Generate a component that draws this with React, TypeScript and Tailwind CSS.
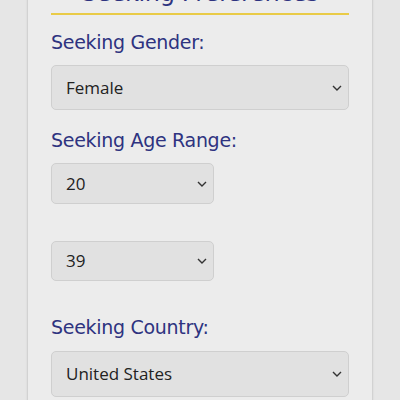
import React from "react";

const Chevron = () => (
  <svg
    className="pointer-events-none absolute right-[7px] top-1/2 -translate-y-1/2"
    width="10"
    height="6"
    viewBox="0 0 10 6"
    fill="none"
  >
    <path d="M1 1l4 4 4-4" stroke="#333" strokeWidth="1.4" />
  </svg>
);

const Select = ({
  value,
  options,
  className,
}: {
  value: string;
  options: string[];
  className: string;
}) => (
  <div className={`relative ${className}`}>
    <select
      defaultValue={value}
      className="w-full h-full appearance-none rounded-[5px] border border-[#cfcfcf] bg-[#e1e1e1] pl-[14px] text-[17px] text-[#222] outline-none"
      style={{ fontFamily: '"Open Sans", sans-serif' }}
    >
      {options.map((o) => (
        <option key={o}>{o}</option>
      ))}
    </select>
    <Chevron />
  </div>
);

const Label = ({ children, className }: { children: React.ReactNode; className: string }) => (
  <label
    className={`block text-[19px] leading-[23px] tracking-[-0.3px] text-[#2e3380] ${className}`}
    style={{ fontFamily: '"DejaVu Sans", sans-serif' }}
  >
    {children}
  </label>
);

export default function App() {
  return (
    <div className="h-[400px] w-[400px] overflow-hidden bg-[#e6e6e6]">
      <div className="mx-[27px] -mt-[23px] h-[460px] border-x border-[#d2d2d2] bg-[#ececec] px-[23px] shadow-[0_0_2px_rgba(0,0,0,0.08)]">
        <h2
          className="border-b-2 border-[#e9cb47] pb-[4px] text-center text-[24px] leading-[32px] tracking-[-0.4px] text-[#2e3380]"
          style={{ fontFamily: '"DejaVu Sans", sans-serif' }}
        >
          Seeking Preferences
        </h2>
        <Label className="mt-[16px]">Seeking Gender:</Label>
        <Select value="Female" options={["Male", "Female"]} className="mt-[11px] h-[45px] w-[298px]" />
        <Label className="mt-[19px]">Seeking Age Range:</Label>
        <Select value="20" options={["18", "20", "25"]} className="mt-[11px] h-[41px] w-[163px]" />
        <Select value="39" options={["30", "39", "50"]} className="mt-[37px] h-[40px] w-[163px]" />
        <Label className="mt-[35px]">Seeking Country:</Label>
        <Select
          value="United States"
          options={["Canada", "United States"]}
          className="mt-[12px] h-[46px] w-[298px]"
        />
      </div>
    </div>
  );
}
